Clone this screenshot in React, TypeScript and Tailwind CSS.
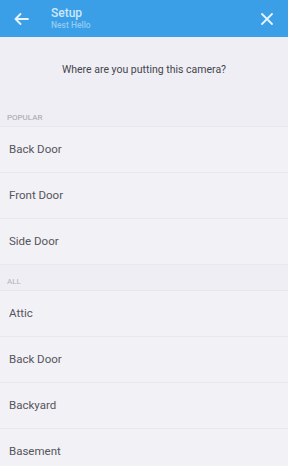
import React from 'react';

const popular = ['Back Door', 'Front Door', 'Side Door'];
const all = ['Attic', 'Back Door', 'Backyard', 'Basement'];

const Row: React.FC<{ label: string }> = ({ label }) => (
  <div className="h-[46px] shrink-0 flex items-center pl-[9px] bg-[#f2f1f6] border-b border-[#e8e7ed] text-[11.5px] text-[#55555c]">
    {label}
  </div>
);

export default function App() {
  return (
    <div className="w-[288px] h-[466px] overflow-hidden bg-[#efeef4] flex flex-col" style={{ fontFamily: 'Roboto, "Liberation Sans", sans-serif' }}>
      <div className="h-[37px] shrink-0 bg-[#3a9fe6] flex items-center px-[14px]">
        <svg width="15" height="12" viewBox="0 0 15 12" fill="none" stroke="#e6f3fd" strokeWidth="1.8" strokeLinecap="round" strokeLinejoin="round">
          <path d="M14 6H1.5M6.5 1L1.5 6l5 5" />
        </svg>
        <div className="ml-[22px] flex flex-col leading-none">
          <span className="text-[12px] font-medium text-[#cfe8fb]">Setup</span>
          <span className="text-[8.5px] font-medium text-[#93cbf3] mt-[2px]">Nest Hello</span>
        </div>
        <div className="flex-1" />
        <svg width="12" height="12" viewBox="0 0 12 12" stroke="#e6f3fd" strokeWidth="1.8" strokeLinecap="round" className="mr-[1px]">
          <path d="M1 1l10 10M11 1L1 11" />
        </svg>
      </div>

      <div className="h-[63px] shrink-0 flex items-center justify-center pt-[2px] text-[10.5px] text-[#45454c]">
        Where are you putting this camera?
      </div>

      <div className="h-[27px] shrink-0 flex items-end pl-[7px] pb-[2px] text-[8px] text-[#a3a2aa] border-b border-[#e8e7ed]">POPULAR</div>
      {popular.map((p) => (
        <Row key={'p' + p} label={p} />
      ))}

      <div className="h-[26px] shrink-0 flex items-end pl-[7px] pb-[2px] text-[8px] text-[#b3b2ba] border-b border-[#e8e7ed]">ALL</div>
      {all.map((p) => (
        <Row key={'a' + p} label={p} />
      ))}
    </div>
  );
}
